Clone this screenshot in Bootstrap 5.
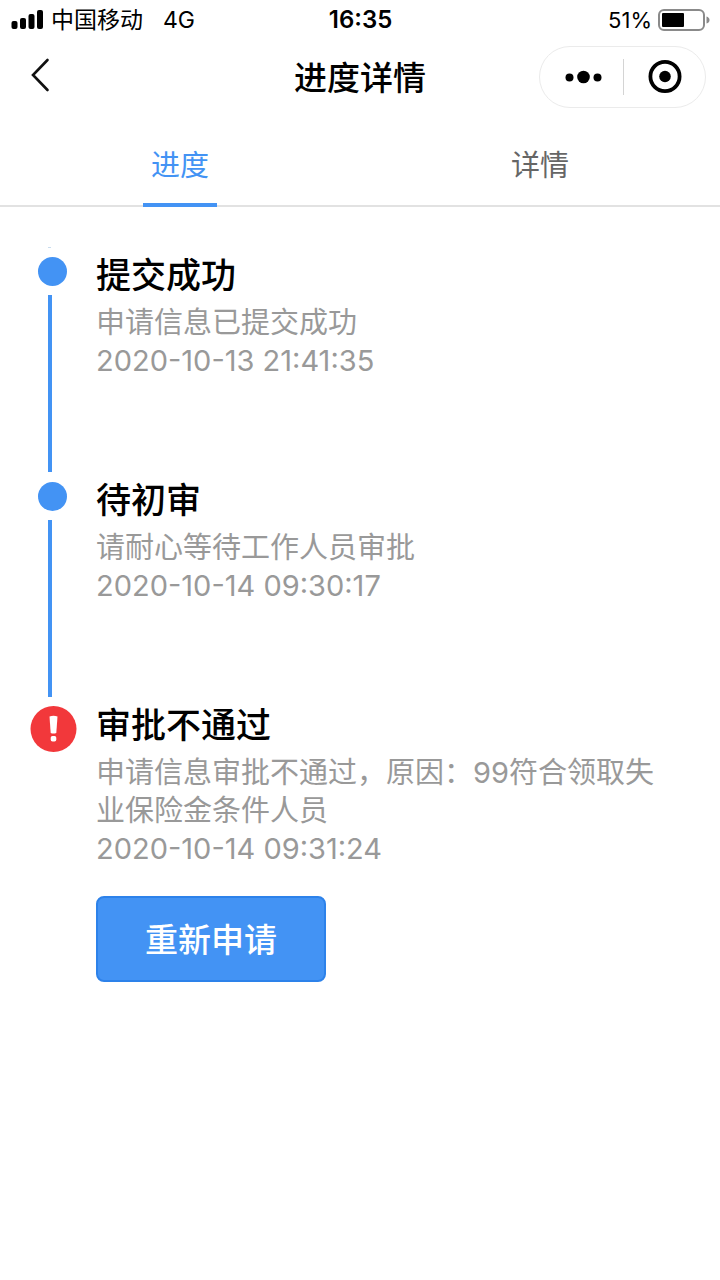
<!DOCTYPE html>
<html lang="zh-CN">
<head>
<meta charset="utf-8">
<meta name="viewport" content="width=device-width, initial-scale=1">
<title>进度详情</title>
<link rel="stylesheet" href="https://cdn.jsdelivr.net/npm/bootstrap@5.3.0/dist/css/bootstrap.min.css">
<style>
  :root { --accent: #4393f4; }
  body { font-family: Inter, "Noto Sans CJK SC", sans-serif; font-size: 29px; line-height: 38px; color: #000; background: #fff; }
  svg { display: block; }

  .status-bar { height: 40px; padding: 0 10px 0 11px; font-size: 23px; line-height: 40px; }
  .status-bar > div { flex: 1 1 0; }
  .clock { font-size: 24px; font-weight: 600; }
  .carrier { margin: 0 20px 0 7px; }
  .charge { font-size: 22px; }

  .title-bar { height: 74px; padding: 0 14px; }
  .title-bar > div { flex: 1 1 0; }
  .title-bar h1 { font-size: 33px; line-height: 44px; font-weight: 500; padding-top: 2px; }
  .plain-btn { background: none; border: 0; padding: 0; color: inherit; }
  .back-btn { padding: 4px 16px 0; }
  .capsule { width: 167px; height: 62px; border: 1px solid #ebebeb; border-radius: 31px; }
  .capsule .plain-btn { height: 60px; }
  .more-btn { width: 83px; padding-left: 3px; }
  .close-btn { width: 81px; }
  .capsule .divider { width: 1px; height: 36px; background: #d4d4d4; }

  .tabs { height: 93px; border-bottom: 2px solid #e2e2e2; }
  .tabs .nav-link { position: relative; height: 93px; padding: 33px 0 0; color: #666; }
  .tabs .nav-link.active { color: var(--accent); }
  .tabs .nav-link.active::after { content: ""; position: absolute; left: 50%; bottom: 0; width: 74px; height: 4px; margin-left: -37px; background: var(--accent); }

  .timeline { padding-top: 40px; }
  .step { padding-right: 38px; }
  .step-mark { width: 96px; flex: none; }
  .step-dot { width: 29px; height: 29px; margin: 10px 0 9px 38px; border-radius: 50%; background: var(--accent); flex: none; }
  .step-tip { width: 3px; height: 1px; margin: 0 0 -1px 48px; background: #c9dcee; flex: none; }
  .step-line { width: 4px; margin-left: 48px; background: var(--accent); }
  .step-alert { margin: 9px 0 0 30px; }
  .step-body { padding: 9px 0 92px; color: #999; }
  .step-body h2 { font-size: 35px; line-height: 38px; font-weight: 500; color: #000; margin: 0 0 10px; }
  .step-body p { margin: 0; }
  .apply-btn { --bs-btn-color: #fff; --bs-btn-bg: #4393f4; --bs-btn-border-color: #2d82ea; --bs-btn-hover-color: #fff; --bs-btn-hover-bg: #3586e8; width: 230px; height: 86px; padding-top: 8px; margin-top: 28px; font-size: 33px; font-weight: 500; line-height: 44px; border-width: 2px; border-radius: 8px; }
</style>
</head>
<body>
<div class="status-bar d-flex align-items-center">
  <div class="d-flex align-items-center">
    <svg width="33" height="20" viewBox="0 0 33 20" aria-hidden="true"><rect x="0.500" y="11" width="6" height="8" rx="2"/><rect x="9" y="8" width="6" height="11" rx="2"/><rect x="17.500" y="4" width="6" height="15" rx="2"/><rect x="26" y="0" width="6" height="19" rx="2"/></svg>
    <span class="carrier">中国移动</span><span>4G</span>
  </div>
  <span class="clock">16:35</span>
  <div class="d-flex align-items-center justify-content-end">
    <span class="charge">51%</span>
    <svg class="ms-1" width="54" height="24" viewBox="0 0 54 24" aria-hidden="true"><rect x="3" y="2" width="45" height="20" rx="5" fill="#fff" stroke="#8a8a8a" stroke-width="2"/><rect x="6" y="5" width="22" height="14" rx="1"/><path d="M50.500 8.500v7q3-1 3-3.500t-3-3.500z" fill="#8a8a8a"/></svg>
  </div>
</div>

<header class="title-bar d-flex align-items-center">
  <div><button type="button" class="plain-btn back-btn" aria-label="返回"><svg width="20" height="34" viewBox="0 0 20 34" fill="none" stroke="#111" stroke-width="2.600" stroke-linecap="round"><path d="M17.500 2 3 17l14.500 15"/></svg></button></div>
  <h1 class="m-0">进度详情</h1>
  <div class="d-flex justify-content-end">
    <div class="capsule d-flex align-items-center">
      <button type="button" class="plain-btn more-btn d-flex align-items-center justify-content-center" aria-label="更多"><svg width="38" height="14" viewBox="0 0 38 14"><circle cx="5.500" cy="7.500" r="4"/><circle cx="19.500" cy="7" r="6.300"/><circle cx="33.500" cy="7.500" r="4"/></svg></button>
      <span class="divider"></span>
      <button type="button" class="plain-btn close-btn d-flex align-items-center justify-content-center" aria-label="关闭"><svg width="34" height="34" viewBox="0 0 34 34"><circle cx="17" cy="16.500" r="14.600" fill="none" stroke="#000" stroke-width="3.800"/><circle cx="17" cy="16.500" r="5.800"/></svg></button>
    </div>
  </div>
</header>

<nav class="tabs nav nav-fill">
  <a class="nav-link nav-item active col-6" href="#progress" aria-current="page">进度</a>
  <a class="nav-link nav-item col-6" href="#detail">详情</a>
</nav>

<main id="progress" class="timeline">
  <section class="step d-flex">
    <div class="step-mark d-flex flex-column"><span class="step-tip"></span><span class="step-dot"></span><span class="step-line flex-grow-1"></span></div>
    <div class="step-body">
      <h2>提交成功</h2>
      <p>申请信息已提交成功</p>
      <p>2020-10-13 21:41:35</p>
    </div>
  </section>
  <section class="step d-flex">
    <div class="step-mark d-flex flex-column"><span class="step-dot"></span><span class="step-line flex-grow-1"></span></div>
    <div class="step-body">
      <h2>待初审</h2>
      <p>请耐心等待工作人员审批</p>
      <p>2020-10-14 09:30:17</p>
    </div>
  </section>
  <section class="step d-flex">
    <div class="step-mark"><svg class="step-alert" width="47" height="47" viewBox="0 0 47 47" role="img" aria-label="未通过"><circle cx="23.500" cy="23" r="23" fill="#f2383b"/><path d="M19.500 10.500q4-1.500 8 0l-1.200 16.500q-2.800 1-5.600 0z" fill="#fff"/><rect x="20.700" y="30" width="5.600" height="5.600" rx="1.800" fill="#fff"/></svg></div>
    <div class="step-body">
      <h2>审批不通过</h2>
      <p>申请信息审批不通过，原因：99符合领取失业保险金条件人员</p>
      <p>2020-10-14 09:31:24</p>
      <button type="button" class="btn apply-btn">重新申请</button>
    </div>
  </section>
</main>
<script src="https://cdn.jsdelivr.net/npm/bootstrap@5.3.0/dist/js/bootstrap.bundle.min.js"></script>
</body>
</html>
